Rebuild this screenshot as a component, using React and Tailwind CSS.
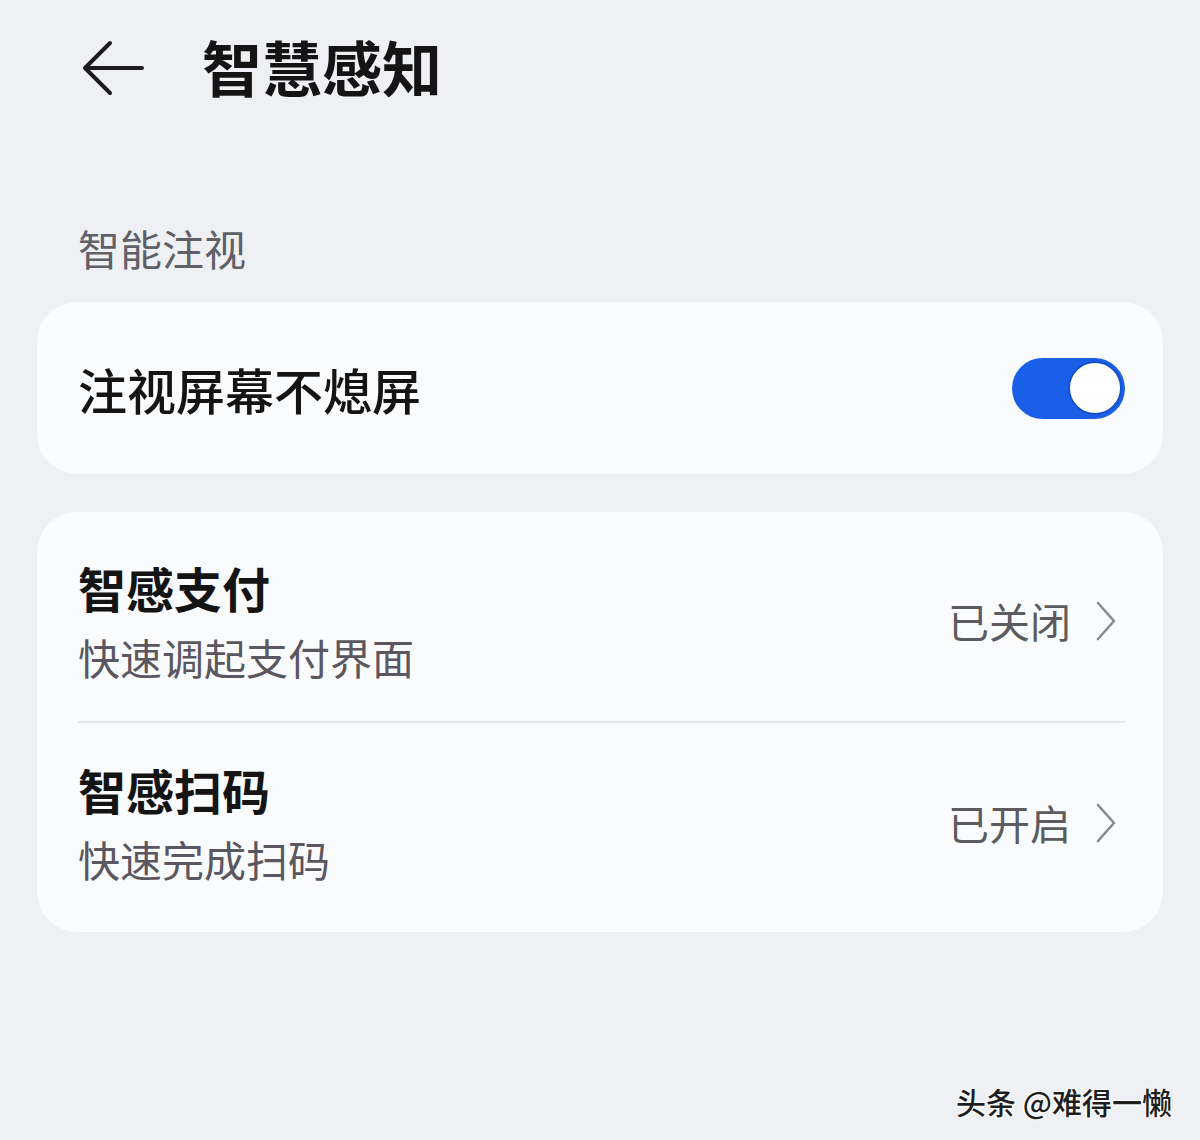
import React from "react";

const font = { fontFamily: '"Noto Sans CJK SC", "Noto Sans", sans-serif' };

function Chevron() {
  return (
    <svg width="22" height="42" viewBox="0 0 22 42" fill="none" className="ml-[24px] mr-[8px]">
      <path d="M3 3 L19 21 L3 39" stroke="#8a8b90" strokeWidth="2.6" strokeLinecap="round" strokeLinejoin="round" />
    </svg>
  );
}

function Row({ title, sub, status, className }) {
  return (
    <div className={"flex items-center " + className}>
      <div className="flex-1 flex flex-col">
        <div className="text-[48px] leading-none font-bold text-[#141414]">{title}</div>
        <div className="mt-[25px] text-[42px] leading-none text-[#5a5760]">{sub}</div>
      </div>
      <div className="flex items-center">
        <span className="text-[41px] leading-none text-[#5b5b60]">{status}</span>
        <Chevron />
      </div>
    </div>
  );
}

export default function App() {
  return (
    <div className="relative min-h-[1140px] bg-[#eef0f4]" style={font}>
      <header className="flex items-center h-[132px] pl-[82px]">
        <svg width="62" height="56" viewBox="0 0 62 56" fill="none" className="mt-[4px]">
          <path d="M28 3 L3 28 L28 53 M3 28 H60" stroke="#1c1c1c" strokeWidth="4" strokeLinecap="round" strokeLinejoin="round" />
        </svg>
        <h1 className="ml-[58px] text-[60px] leading-none font-bold text-[#141414]">智慧感知</h1>
      </header>

      <div className="mt-[95px] pl-[78px] text-[42px] leading-none text-[#606066]">智能注视</div>

      <div className="mx-[37px] mt-[33px] h-[172px] rounded-[40px] bg-[#fafbfd] flex items-center pl-[41px] pr-[38px]">
        <span className="flex-1 text-[49px] leading-none font-medium text-[#141414]">注视屏幕不熄屏</span>
        <div className="w-[113px] h-[61px] rounded-full bg-[#1a5fe8] flex items-center justify-end pr-[3px]">
          <div className="w-[54px] h-[54px] rounded-full bg-white border-[2px] border-[#1650cc]" />
        </div>
      </div>

      <div className="mx-[37px] mt-[38px] rounded-[40px] bg-[#fafbfd] pl-[41px] pr-[38px]">
        <Row title="智感支付" sub="快速调起支付界面" status="已关闭" className="h-[209px] pt-[8px]" />
        <div className="h-[2px] bg-[#e4e5e9]" />
        <Row title="智感扫码" sub="快速完成扫码" status="已开启" className="h-[209px] pb-[10px]" />
      </div>

      <div
        className="absolute right-[28px] bottom-[24px] text-[30px] leading-none font-medium text-[#1e1e1e]"
        style={{ textShadow: "1px 1px 0 #fff, -1px -1px 0 #fff, 1px -1px 0 #fff, -1px 1px 0 #fff" }}
      >
        头条 @难得一懒
      </div>
    </div>
  );
}
